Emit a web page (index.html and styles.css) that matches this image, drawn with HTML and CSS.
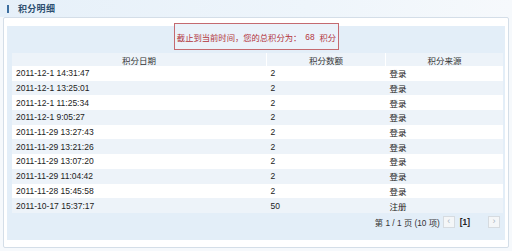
FILE: index.html
```html
<!DOCTYPE html>
<html lang="zh">
<head>
<meta charset="utf-8">
<link rel="stylesheet" href="styles.css">
</head>
<body>
<div class="titlebar">
  <span class="bar"></span>
  <span class="title">积分明细</span>
</div>
<div class="panel">
  <div class="inner">
    <div class="notice">截止到当前时间，您的总积分为：<span class="num">68</span>积分</div>
    <table class="grid">
      <thead>
        <tr><th class="c1">积分日期</th><th class="c2">积分数额</th><th class="c3">积分来源</th></tr>
      </thead>
      <tbody>
        <tr><td>2011-12-1 14:31:47</td><td>2</td><td>登录</td></tr>
        <tr><td>2011-12-1 13:25:01</td><td>2</td><td>登录</td></tr>
        <tr><td>2011-12-1 11:25:34</td><td>2</td><td>登录</td></tr>
        <tr><td>2011-12-1 9:05:27</td><td>2</td><td>登录</td></tr>
        <tr><td>2011-11-29 13:27:43</td><td>2</td><td>登录</td></tr>
        <tr><td>2011-11-29 13:21:26</td><td>2</td><td>登录</td></tr>
        <tr><td>2011-11-29 13:07:20</td><td>2</td><td>登录</td></tr>
        <tr><td>2011-11-29 11:04:42</td><td>2</td><td>登录</td></tr>
        <tr><td>2011-11-28 15:45:58</td><td>2</td><td>登录</td></tr>
        <tr><td>2011-10-17 15:37:17</td><td>50</td><td>注册</td></tr>
      </tbody>
    </table>
    <div class="pager">
      <span class="info">第 1 / 1 页 (10 项)</span>
      <span class="btn">&lsaquo;</span>
      <span class="cur">[1]</span>
      <span class="btn">&rsaquo;</span>
    </div>
  </div>
</div>
</body>
</html>
```
FILE: styles.css
```css
html, body {
  margin: 0;
  padding: 0;
}
body {
  width: 512px;
  height: 251px;
  background: #f6f9fc;
  font-family: "Liberation Sans", "Noto Sans CJK SC", sans-serif;
  color: #333;
  overflow: hidden;
}
.titlebar {
  height: 17px;
  display: flex;
  align-items: center;
  padding-left: 7px;
  background: linear-gradient(to right, #e6f0f9 0%, #eef5fb 60%, #f6f9fc 100%);
}
.bar {
  width: 2px;
  height: 8px;
  background: #3c6e9f;
  margin-right: 9px;
}
.title {
  font-size: 9px;
  font-weight: bold;
  color: #2d4f70;
  letter-spacing: 0.3px;
}
.panel {
  margin: 0 3px;
  height: 231px;
  box-sizing: border-box;
  border: 1px solid #d4dee8;
  border-radius: 2px;
  background: #fff;
  padding: 8px 3px 7px;
}
.inner {
  height: 100%;
  box-sizing: border-box;
  background: #e3eef8;
  padding: 0 4px 0 5px;
  display: flex;
  flex-direction: column;
}
.notice {
  align-self: center;
  margin-top: -3px;
  width: 165px;
  height: 27px;
  box-sizing: border-box;
  border: 1px solid #c46a70;
  background: #eaf2fa;
  color: #b2323a;
  font-size: 8.3px;
  display: flex;
  align-items: center;
  justify-content: center;
  white-space: nowrap;
}
.num {
  margin: 0 5px 0 4px;
}
.grid {
  margin-top: 3px;
  width: 489px;
  border-collapse: collapse;
  table-layout: fixed;
  font-size: 8.5px;
}
.grid th {
  height: 13px;
  padding: 0;
  font-weight: normal;
  background: #edf3f9;
  border-left: 1px solid #fff;
  color: #333;
  font-size: 8.5px;
}
.grid th:first-child { border-left: none; }
.c1 { width: 254px; }
.c2 { width: 118px; }
.c3 { width: 117px; }
.grid td {
  height: 14.7px;
  padding: 0 0 0 4px;
  white-space: nowrap;
  color: #222;
}
.grid tbody tr:nth-child(odd) td { background: #ffffff; }
.grid tbody tr:nth-child(even) td { background: #edf3f9; }
.pager {
  display: flex;
  justify-content: flex-end;
  align-items: center;
  height: 15px;
  margin-top: 2px;
  padding-right: 1px;
  font-size: 8.3px;
  color: #333;
}
.info { margin-right: 3px; }
.btn {
  width: 10px;
  height: 10px;
  border: 1px solid #d6dbe0;
  background: #f4f6f8;
  color: #a8b4c0;
  font-size: 9px;
  line-height: 9px;
  text-align: center;
}
.cur {
  font-weight: bold;
  margin: 0 8px 0 5px;
  color: #222;
}
.cur + .btn { margin-left: 10px; }
```
